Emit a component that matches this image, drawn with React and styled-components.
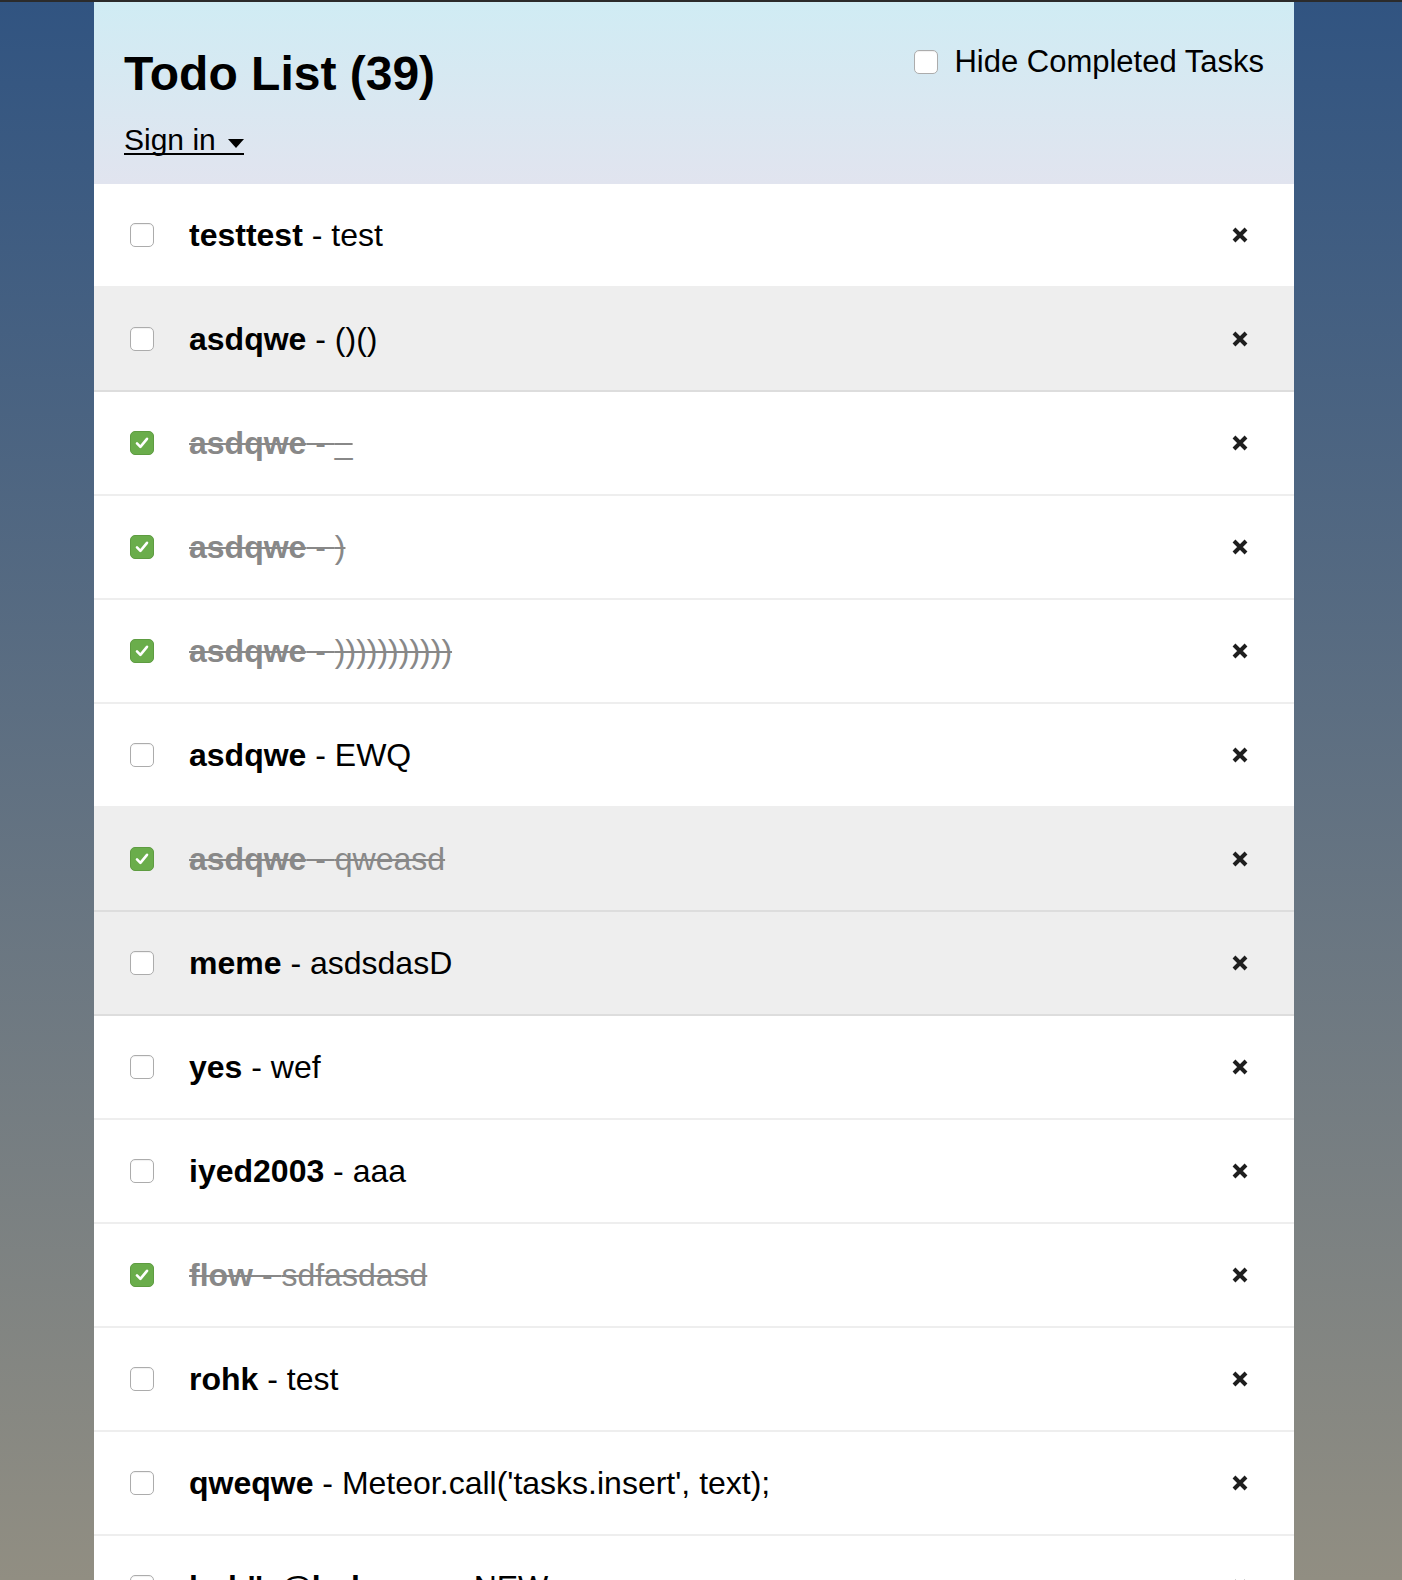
import React from 'react'
import styled, { createGlobalStyle } from 'styled-components'

const GlobalStyle = createGlobalStyle`
  html, body {
    margin: 0;
    padding: 0;
  }
  body {
    font-family: "Liberation Sans", Arial, sans-serif;
    color: #000;
  }
`

const Page = styled.div`
  height: 1578px;
  overflow: hidden;
  border-top: 2px solid #2b2b2b;
  background-color: #315481;
  background-image: linear-gradient(to bottom, #315481, #918e82 100%);
`

const Container = styled.div`
  width: 1200px;
  margin-left: 94px;
  min-height: 100%;
  background: white;
`

const Header = styled.header`
  display: flex;
  justify-content: space-between;
  align-items: flex-start;
  padding: 44px 30px 29px 30px;
  background: #d2edf4;
  background-image: linear-gradient(to bottom, #d0ecf4, #e1e4ef 100%);
`

const HeaderLeft = styled.div`
  display: flex;
  flex-direction: column;
  align-items: flex-start;
`

const Title = styled.h1`
  margin: 0 0 25px 0;
  font-size: 48px;
  line-height: 56px;
  font-weight: bold;
`

const SignIn = styled.a`
  display: inline-flex;
  align-items: flex-end;
  font-size: 30px;
  line-height: 26px;
  height: 26px;
  color: #000;
  text-decoration: none;
  border-bottom: 2px solid #000;
  cursor: pointer;
`

const Caret = styled.span`
  display: inline-block;
  width: 0;
  height: 0;
  margin: 0 0 5px 12px;
  border-left: 8.5px solid transparent;
  border-right: 8.5px solid transparent;
  border-top: 9px solid #000;
`

const HideLabel = styled.label`
  display: flex;
  align-items: center;
  gap: 16px;
  margin-top: -2px;
  font-size: 31px;
  line-height: 36px;
`

const Box = styled.span`
  box-sizing: border-box;
  display: inline-flex;
  align-items: center;
  justify-content: center;
  flex: none;
  width: 24px;
  height: 24px;
  border-radius: 5px;
  border: 1px solid ${({ $checked }) => ($checked ? '#5e9c41' : '#acacac')};
  background: ${({ $checked }) => ($checked ? '#6aad4b' : '#fff')};
  box-shadow: ${({ $checked }) => ($checked ? 'none' : 'inset 0 1px 1px rgba(0,0,0,0.06)')};
`

const List = styled.ul`
  margin: 0;
  padding: 0;
  background: white;
`

const Item = styled.li`
  display: flex;
  align-items: center;
  height: 42px;
  list-style: none;
  padding: 30px 30px;
  border-bottom: 2px solid ${({ $private }) => ($private ? '#dddddd' : '#eeeeee')};
  background: ${({ $private }) => ($private ? '#eeeeee' : 'white')};
  color: ${({ $checked }) => ($checked ? '#888' : '#000')};
`

const ItemBox = styled(Box)`
  margin-left: 6px;
`

const Text = styled.span`
  flex: 1;
  margin-left: 35px;
  font-size: 32px;
  line-height: 42px;
  white-space: nowrap;
  text-decoration: ${({ $checked }) => ($checked ? 'line-through' : 'none')};
  text-decoration-thickness: 2px;
`

const Name = styled.strong`
  font-weight: bold;
`

const Delete = styled.button`
  display: flex;
  align-items: center;
  justify-content: center;
  width: 16px;
  height: 16px;
  margin-right: 16px;
  padding: 0;
  border: none;
  background: none;
  cursor: pointer;
`

const tasks = [
  { name: 'testtest', text: 'test' },
  { name: 'asdqwe', text: '()()', private: true },
  { name: 'asdqwe', text: '_', checked: true },
  { name: 'asdqwe', text: ')', checked: true },
  { name: 'asdqwe', text: ')))))))))))', checked: true },
  { name: 'asdqwe', text: 'EWQ' },
  { name: 'asdqwe', text: 'qweasd', checked: true, private: true },
  { name: 'meme', text: 'asdsdasD', private: true },
  { name: 'yes', text: 'wef' },
  { name: 'iyed2003', text: 'aaa' },
  { name: 'flow', text: 'sdfasdasd', checked: true },
  { name: 'rohk', text: 'test' },
  { name: 'qweqwe', text: "Meteor.call('tasks.insert', text);" },
  { name: "bob''_@bob.com", text: 'NEW' },
  { name: 'asdqwe', text: 'test' },
]

const Check = () => (
  <svg width="16" height="16" viewBox="0 0 16 16">
    <path d="M3 8.4 L6.4 11.8 L13 3.8" fill="none" stroke="#fff" strokeWidth="2.6" strokeLinecap="round" strokeLinejoin="round" />
  </svg>
)

const Cross = () => (
  <svg width="16" height="16" viewBox="0 0 16 16">
    <path d="M2 2 L14 14 M14 2 L2 14" stroke="#1e1e1e" strokeWidth="4" />
  </svg>
)

const Task = ({ task }) => (
  <Item $private={task.private} $checked={task.checked}>
    <ItemBox $checked={task.checked}>{task.checked && <Check />}</ItemBox>
    <Text $checked={task.checked}>
      <Name>{task.name}</Name> - {task.text}
    </Text>
    <Delete aria-label="delete"><Cross /></Delete>
  </Item>
)

export default function App() {
  return (
    <Page>
      <GlobalStyle />
      <Container>
        <Header>
          <HeaderLeft>
            <Title>Todo List (39)</Title>
            <SignIn>Sign in<Caret /></SignIn>
          </HeaderLeft>
          <HideLabel>
            <Box />
            Hide Completed Tasks
          </HideLabel>
        </Header>
        <List>
          {tasks.map((task, idx) => <Task key={idx} task={task} />)}
        </List>
      </Container>
    </Page>
  )
}
